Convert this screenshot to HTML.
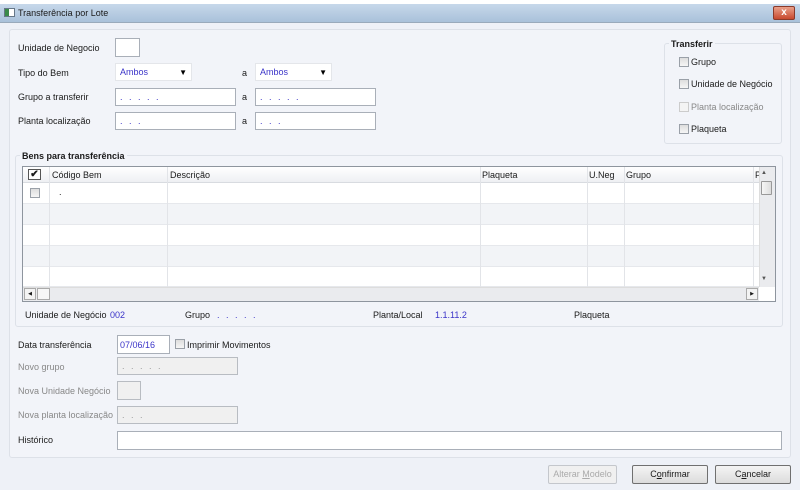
<!DOCTYPE html>
<html><head><meta charset="utf-8"><style>
*{box-sizing:border-box;margin:0;padding:0}
body{width:800px;height:490px;background:#eef1f7;font-family:"Liberation Sans",sans-serif;font-size:9px;color:#1a1a1a;position:relative;overflow:hidden}
.a{position:absolute;white-space:nowrap}
.top{left:0;top:0;width:800px;height:4px;background:#fff}
.title{left:0;top:4px;width:800px;height:19px;background:linear-gradient(#c7d8ea,#a9c1da);border-bottom:1px solid #9ab}
.inp{position:absolute;background:#fff;border:1px solid #a9afb8}
.dis{background:#f0f0f0;border-color:#b8bcc2;color:#999}
.blue{color:#3a33c8}
.g{color:#888}
.cb{position:absolute;width:10px;height:10px;border:1px solid #9aa0a8;background:linear-gradient(#ddd,#f6f6f6)}
.btn{position:absolute;height:19px;border:1px solid #707070;border-radius:2px;background:linear-gradient(#f4f4f4,#dcdcdc);text-align:center;line-height:17px}
.row{position:absolute;left:23px;width:736px;height:21px;border-bottom:1px solid #e6e8ec}
.vl{position:absolute;top:167px;height:120px;width:1px;background:#e2e4e8}
.arr{position:absolute;right:4px;top:5px;color:#000;font-size:8px;line-height:8px}
</style></head><body>
<div class="a top"></div>
<div class="a title"></div>
<div class="a" style="left:4px;top:8px;width:11px;height:9px;background:#fff;border:1px solid #678"><div style="width:4px;height:7px;background:#3a8a4a"></div></div>
<div class="a" style="left:18px;top:8px;font-size:9px">Transferência por Lote</div>
<div class="a" style="left:773px;top:6px;width:22px;height:14px;background:linear-gradient(#e9a08a,#c8492e);border:1px solid #8a3a2a;border-radius:2px;color:#fff;font-weight:bold;text-align:center;line-height:12px;font-size:10px">x</div>

<div class="a" style="left:9px;top:29px;width:782px;height:429px;border:1px solid #dde1e8;border-radius:3px;background:#f2f4f9"></div>

<div class="a" style="left:18px;top:43px">Unidade de Negocio</div>
<div class="inp" style="left:115px;top:38px;width:25px;height:19px"></div>
<div class="a" style="left:18px;top:68px">Tipo do Bem</div>
<div class="inp blue" style="left:115px;top:63px;width:77px;height:18px;border-color:#e4e6ea;padding:3px 4px">Ambos<span class="arr">▼</span></div>
<div class="a" style="left:242px;top:68px">a</div>
<div class="inp blue" style="left:255px;top:63px;width:77px;height:18px;border-color:#e4e6ea;padding:3px 4px">Ambos<span class="arr">▼</span></div>
<div class="a" style="left:18px;top:92px">Grupo a transferir</div>
<div class="inp blue" style="left:115px;top:88px;width:121px;height:18px;padding:3px 4px;letter-spacing:2px">. . . . .</div>
<div class="a" style="left:242px;top:92px">a</div>
<div class="inp blue" style="left:255px;top:88px;width:121px;height:18px;padding:3px 4px;letter-spacing:2px">. . . . .</div>
<div class="a" style="left:18px;top:116px">Planta localização</div>
<div class="inp blue" style="left:115px;top:112px;width:121px;height:18px;padding:3px 4px;letter-spacing:2px">. . .</div>
<div class="a" style="left:242px;top:116px">a</div>
<div class="inp blue" style="left:255px;top:112px;width:121px;height:18px;padding:3px 4px;letter-spacing:2px">. . .</div>

<div class="a" style="left:664px;top:43px;width:118px;height:101px;border:1px solid #dde1e8;border-radius:3px"></div>
<div class="a" style="left:669px;top:39px;font-weight:bold;background:#f2f4f9;padding:0 2px">Transferir</div>
<div class="cb" style="left:679px;top:57px"></div><div class="a" style="left:691px;top:57px">Grupo</div>
<div class="cb" style="left:679px;top:79px"></div><div class="a" style="left:691px;top:79px">Unidade de Negócio</div>
<div class="cb" style="left:679px;top:102px;border-color:#ccc;background:#f4f4f4"></div><div class="a g" style="left:691px;top:102px">Planta localização</div>
<div class="cb" style="left:679px;top:124px"></div><div class="a" style="left:691px;top:124px">Plaqueta</div>

<div class="a" style="left:15px;top:155px;width:768px;height:172px;border:1px solid #dde1e8;border-radius:3px"></div>
<div class="a" style="left:20px;top:151px;font-weight:bold;background:#f2f4f9;padding:0 2px">Bens para transferência</div>
<div class="a" style="left:22px;top:166px;width:754px;height:136px;border:1px solid #8e959e;background:#fff"></div>
<div class="a" style="left:23px;top:167px;width:736px;height:16px;background:linear-gradient(#fff,#eef0f3);border-bottom:1px solid #d8dbe0"></div>
<div class="a" style="left:28px;top:169px;width:13px;height:11px;border:1px solid #555;background:#fff;font-size:10px;line-height:9px;text-align:center;font-weight:bold">✔</div>
<div class="a" style="left:52px;top:170px">Código Bem</div>
<div class="a" style="left:170px;top:170px">Descrição</div>
<div class="a" style="left:482px;top:170px">Plaqueta</div>
<div class="a" style="left:589px;top:170px">U.Neg</div>
<div class="a" style="left:626px;top:170px">Grupo</div>
<div class="a" style="left:755px;top:170px">P</div>
<div class="row" style="top:183px;background:#fff"></div>
<div class="row" style="top:204px;background:#f2f4f7"></div>
<div class="row" style="top:225px;background:#fff"></div>
<div class="row" style="top:246px;background:#f2f4f7"></div>
<div class="row" style="top:267px;background:#fff;height:20px"></div>
<div class="vl" style="left:49px"></div><div class="vl" style="left:167px"></div><div class="vl" style="left:480px"></div><div class="vl" style="left:587px"></div><div class="vl" style="left:624px"></div><div class="vl" style="left:753px"></div>
<div class="cb" style="left:30px;top:188px"></div>
<div class="a" style="left:59px;top:187px">.</div>
<div class="a" style="left:759px;top:167px;width:16px;height:120px;background:#eaebee;border-left:1px solid #ddd"></div>
<div class="a" style="left:761px;top:170px;font-size:6px;color:#555">▲</div>
<div class="a" style="left:761px;top:181px;width:11px;height:14px;border:1px solid #999;background:linear-gradient(90deg,#f6f6f6,#ddd);border-radius:1px"></div>
<div class="a" style="left:761px;top:276px;font-size:6px;color:#555">▼</div>
<div class="a" style="left:23px;top:287px;width:736px;height:14px;background:#eaebee;border-top:1px solid #ddd"></div>
<div class="a" style="left:24px;top:288px;width:12px;height:12px;border:1px solid #aaa;background:#f3f3f3;font-size:5px;text-align:center;line-height:10px">◀</div>
<div class="a" style="left:37px;top:288px;width:13px;height:12px;border:1px solid #aaa;background:#f6f6f6"></div>
<div class="a" style="left:746px;top:288px;width:12px;height:12px;border:1px solid #aaa;background:#f3f3f3;font-size:5px;text-align:center;line-height:10px">▶</div>

<div class="a" style="left:25px;top:310px">Unidade de Negócio</div>
<div class="a blue" style="left:110px;top:310px">002</div>
<div class="a" style="left:185px;top:310px">Grupo</div>
<div class="a blue" style="left:217px;top:310px;letter-spacing:2px">. . . . .</div>
<div class="a" style="left:373px;top:310px">Planta/Local</div>
<div class="a blue" style="left:435px;top:310px">1.1.11.2</div>
<div class="a" style="left:574px;top:310px">Plaqueta</div>

<div class="a" style="left:18px;top:340px">Data transferência</div>
<div class="inp blue" style="left:117px;top:335px;width:53px;height:19px;padding:4px 2px">07/06/16</div>
<div class="cb" style="left:175px;top:339px"></div>
<div class="a" style="left:187px;top:340px">Imprimir Movimentos</div>
<div class="a g" style="left:18px;top:362px">Novo grupo</div>
<div class="inp dis" style="left:117px;top:357px;width:121px;height:18px;padding:3px 4px;letter-spacing:2px">. . . . .</div>
<div class="a g" style="left:18px;top:386px">Nova Unidade Negócio</div>
<div class="inp dis" style="left:117px;top:381px;width:24px;height:19px"></div>
<div class="a g" style="left:18px;top:410px">Nova planta localização</div>
<div class="inp dis" style="left:117px;top:406px;width:121px;height:18px;padding:3px 4px;letter-spacing:2px">. . .</div>
<div class="a" style="left:18px;top:435px">Histórico</div>
<div class="inp" style="left:117px;top:431px;width:665px;height:19px"></div>

<div class="btn" style="left:548px;top:465px;width:69px;border-color:#c4c7cc;color:#aaa;background:#f0f0f0">Alterar <u>M</u>odelo</div>
<div class="btn" style="left:632px;top:465px;width:76px">C<u>o</u>nfirmar</div>
<div class="btn" style="left:715px;top:465px;width:76px">C<u>a</u>ncelar</div>
</body></html>
